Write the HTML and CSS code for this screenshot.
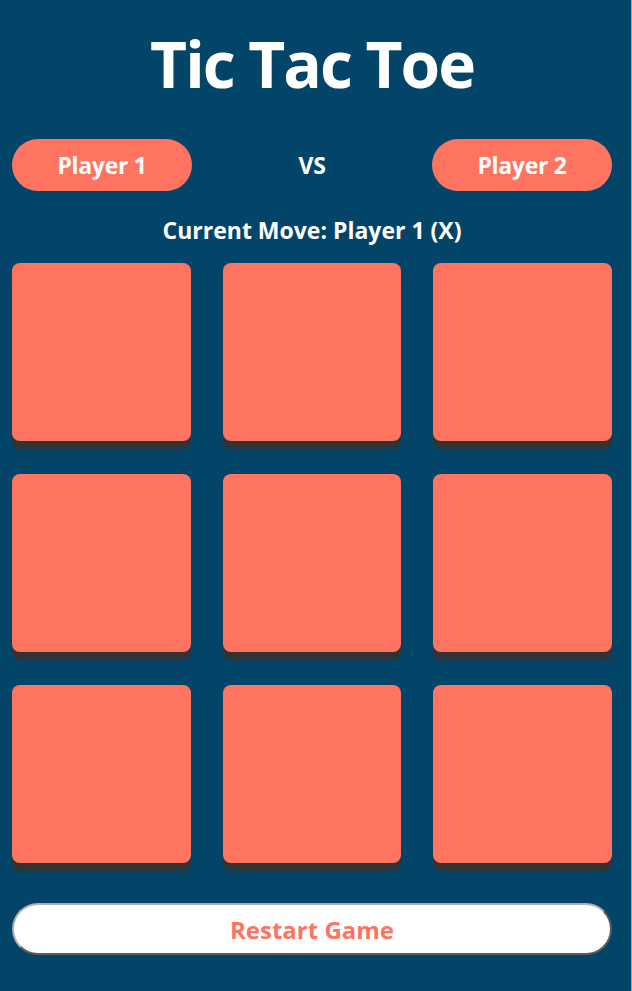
FILE: index.html
```html
<!DOCTYPE html>
<html lang="en">
<head>
<meta charset="utf-8">
<title>Tic Tac Toe</title>
<link rel="stylesheet" href="styles.css">
</head>
<body>
<main class="game">
  <h1 class="title">Tic Tac Toe</h1>
  <div class="players">
    <div class="pill">Player 1</div>
    <div class="vs">VS</div>
    <div class="pill">Player 2</div>
  </div>
  <p class="status">Current Move: Player 1 (X)</p>
  <div class="board">
    <div class="cell"></div>
    <div class="cell"></div>
    <div class="cell"></div>
    <div class="cell"></div>
    <div class="cell"></div>
    <div class="cell"></div>
    <div class="cell"></div>
    <div class="cell"></div>
    <div class="cell"></div>
  </div>
  <button class="restart" type="button">Restart Game</button>
</main>
</body>
</html>
```
FILE: styles.css
```css
html, body {
  margin: 0;
  padding: 0;
  background: #034569;
}
body {
  font-family: "Open Sans", "Noto Sans", sans-serif;
  color: #ffffff;
  min-height: 991px;
  box-sizing: border-box;
  border-right: 1px solid #9aa7b0;
}
.game {
  width: 600px;
  padding: 0 0 0 12px;
  display: flex;
  flex-direction: column;
}
.title {
  margin: 24px 0 0;
  height: 90px;
  font-size: 64px;
  line-height: 80px;
  font-weight: 700;
  text-align: center;
  letter-spacing: -2px;
}
.players {
  margin-top: 25px;
  display: flex;
  justify-content: space-between;
  align-items: center;
}
.pill {
  width: 180px;
  height: 52px;
  border-radius: 26px;
  background: #ff7460;
  display: flex;
  align-items: center;
  justify-content: center;
  font-size: 23px;
  font-weight: 700;
  letter-spacing: -0.3px;
}
.vs {
  font-size: 23px;
  font-weight: 700;
  letter-spacing: -0.3px;
}
.status {
  margin: 22px 0 0;
  height: 34px;
  line-height: 34px;
  text-align: center;
  font-size: 23px;
  font-weight: 700;
  letter-spacing: 0;
}
.board {
  margin-top: 16px;
  display: grid;
  grid-template-columns: repeat(3, 1fr);
  grid-auto-rows: 178px;
  column-gap: 32px;
  row-gap: 33px;
}
.cell {
  background: #ff7460;
  border-radius: 8px;
  box-shadow: 0 8px 3px #333333;
}
.restart {
  margin-top: 40px;
  height: 52px;
  width: 600px;
  border-radius: 26px;
  background: #ffffff;
  border: 2px outset #b0b0b0;
  color: #ff7460;
  font-family: inherit;
  font-size: 24px;
  font-weight: 700;
  letter-spacing: 0;
  cursor: pointer;
}
```
